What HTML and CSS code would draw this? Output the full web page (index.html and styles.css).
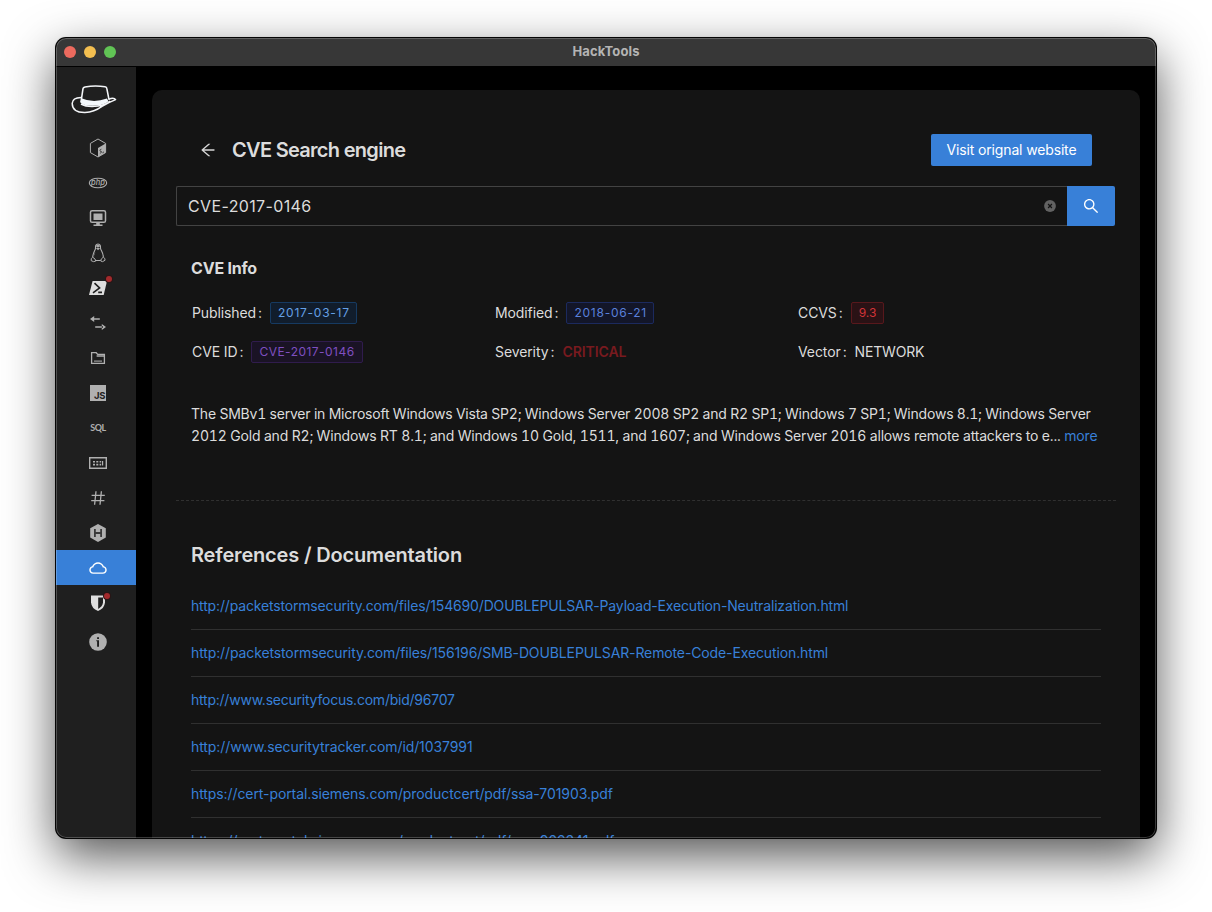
FILE: index.html
```html
<!DOCTYPE html>
<html lang="en">
<head>
<meta charset="utf-8">
<title>HackTools</title>
<link rel="stylesheet" href="styles.css">
</head>
<body>
<div class="window">
  <header class="titlebar">
    <div class="lights"><span class="light red"></span><span class="light yellow"></span><span class="light green"></span></div>
    <span class="window-title">HackTools</span>
  </header>
  <div class="body">
    <nav class="sidebar">
      <svg class="hat" width="46" height="30" viewBox="0 0 46 30">
        <path d="M10 17 L12 3.600 Q12.200 2.400 14 2 Q24 .2 34 1.800 Q35.600 2.100 35.800 3.400 L38 14.600" fill="none" stroke="#f3f5f8" stroke-width="1.600"/>
        <path d="M10.400 13.200 Q22 18.400 36 13.600 L37.400 16.200 Q34 20 24 20.600 Q13 21 9.400 17.800Z" fill="#f3f7fb"/>
        <path d="M10 12.600 Q1.600 12.800 1.200 18.400 Q1.400 27.600 14 27.400 Q23 27.200 31 21.400 Q39 16.800 44.600 14.600 Q43 12.200 37.600 14.200 M10 19 Q16 22.400 27 21 Q35 20 39 16" fill="none" stroke="#f3f5f8" stroke-width="1.500" stroke-linejoin="round"/>
      </svg>
      <ul class="menu">
        <li class="item"><svg width="18" height="20" viewBox="0 0 18 20"><path d="M9 1 L16.600 5.400 V14.600 L9 19 L1.400 14.600 V5.400Z" fill="none" stroke="#b0b0b0"/><path d="M9 10 L16.600 5.600 V14.600 L9 19Z" fill="#b0b0b0"/><path d="M12.400 11.200q-1.600.3-1.400 1.400t1.400.9q.8.8-1.500 1.900M13.400 14.800l1.600-.9" stroke="#333" stroke-width=".9" fill="none"/></svg></li>
        <li class="item"><svg width="20" height="12" viewBox="0 0 20 12"><ellipse cx="10" cy="6" rx="8.700" ry="4.800" fill="none" stroke="#adadad" stroke-width="1.100"/><text x="10" y="8.200" class="php">php</text></svg></li>
        <li class="item"><svg width="18" height="18" viewBox="0 0 18 18"><rect x="1.500" y="1.700" width="15" height="11.600" rx="1.600" fill="none" stroke="#b0b0b0" stroke-width="1.500"/><path d="M4.500 4.500h9v6.500h-9zM7.200 13.400h3.600v2H13.500V17H4.500v-1.600h2.700z" fill="#b0b0b0"/></svg></li>
        <li class="item"><svg width="18" height="20" viewBox="0 0 18 20"><path d="M9 1C6.700 1 6.400 2.800 6.500 5.200C6.500 7 3.900 9.700 3.700 14.200M9 1C11.300 1 11.600 3 11.500 5.200C11.700 7.300 14.400 9.800 14.300 14.200" fill="none" stroke="#b0b0b0" stroke-width="1.100"/><path d="M7 5.200Q9 3.800 11 5.400L9 7.200ZM6.600 8.600L5 12.600L5.600 16L4.800 11.800ZM7.300 2Q9 .8 10.700 2.200V4H7.300Z" fill="#a8a8a8"/><path d="M3.700 14.200Q1.600 15.200 2.200 17.700Q4.800 19.400 6.700 18.100Q6.900 16 3.700 14.200ZM14.300 14.200Q16.600 15.400 16 17.300Q13.200 19.600 11.700 18Q11.600 15.800 14.300 14.200ZM6.700 17.500H11.600" fill="none" stroke="#b0b0b0"/></svg></li>
        <li class="item"><svg width="18" height="16" viewBox="0 0 18 16"><path d="M3.600 1H18L14.700 15H0Z" fill="#dedede"/><path d="M5.500 3.200L10.600 8L4 12.800M9.200 12.400H13" fill="none" stroke="#1f1f1f" stroke-width="1.600"/></svg><i class="dot dot-high"></i></li>
        <li class="item"><svg width="18" height="18" viewBox="0 0 18 18"><path d="M5.200 2V8L1 5ZM4 4.200H10.800V5.800H4ZM12.800 10V16L17 13ZM6.200 12.200H14V13.800H6.200Z" fill="#b0b0b0"/></svg></li>
        <li class="item"><svg width="16" height="16" viewBox="0 0 16 16"><path d="M1.600 13.300V2.700H6.200L7.700 4.400H14.400V13.300Z M6.600 6H14" fill="none" stroke="#b0b0b0" stroke-width="1.300"/><path d="M4 10.300H12V12H4Z" fill="#777"/></svg></li>
        <li class="item"><span class="js">JS</span></li>
        <li class="item"><span class="sql">SQL</span></li>
        <li class="item"><svg width="18" height="12" viewBox="0 0 18 12"><path d="M.7.7H17.300V11.300H.7Z" fill="none" stroke="#b0b0b0" stroke-width="1.400"/><path d="M4 4h2v1.600H4zM7.300 4h2v1.600h-2zM10.600 4h1.600v1.600h-1.600zM4 6.800h2v1.600H4zM7.300 6.800h2v1.600h-2zM10.600 6.800h1.600v1.600h-1.600zM13 4h1.200v4.400H13z" fill="#b0b0b0"/></svg></li>
        <li class="item"><svg width="16" height="16" viewBox="0 0 16 16"><path d="M6 1.200L4.600 14.800M11.400 1.200L10 14.800M1.600 5.300H14.800M1.200 10.700H14.400" fill="none" stroke="#b0b0b0" stroke-width="1.300"/></svg></li>
        <li class="item"><svg width="18" height="20" viewBox="0 0 18 20"><path d="M9 1L16.800 5.200V14.600L9 19L1.200 14.600V5.200Z" fill="#b0b0b0"/><path d="M5.900 6V14M12.100 6V14M6 10H12" stroke="#3a3a3a" stroke-width="1.800"/></svg></li>
        <li class="item active"><svg width="20" height="20" viewBox="0 0 1024 1024"><path fill="#fff" d="M811.400 418.700C765.600 297.900 648.900 212 512.200 212S258.800 297.800 213 418.600C127.300 441.100 64 519.100 64 612c0 110.500 89.500 200 199.900 200h496.200C870.500 812 960 722.500 960 612c0-92.700-63.100-170.700-148.600-193.300zm36.300 281a123.070 123.070 0 01-87.600 36.300H263.900c-33.100 0-64.200-12.900-87.600-36.300A123.300 123.300 0 01140 612c0-28 9.100-54.300 26.200-76.300a125.700 125.700 0 0166.100-43.700l37.900-9.900 13.900-36.600c8.600-22.800 20.600-44.100 35.700-63.400a245.600 245.600 0 0152.400-49.900c41.100-28.900 89.500-44.200 140-44.200s98.900 15.300 140 44.200c19.900 14 37.500 30.800 52.400 49.900 15.100 19.300 27.100 40.700 35.700 63.400l13.800 36.500 37.800 10c54.300 14.500 92.100 63.800 92.100 120 0 33.100-12.900 64.300-36.300 87.700z"/></svg></li>
        <li class="item"><svg width="16" height="18" viewBox="0 0 16 18"><path d="M1 1.600H15V8.500Q14.400 14.500 8 17Q1.600 14.500 1 8.500Z" fill="#dedede"/><path d="M8.200 3.400H13V8.600Q12.400 12.800 8.200 14.900Z" fill="#1f1f1f"/></svg><i class="dot"></i></li>
        <li class="item last"><svg width="18" height="18" viewBox="0 0 18 18"><circle cx="9" cy="9" r="8.800" fill="#b0b0b0"/><path d="M7.300 7.200H10V13.800H8.100V8.300H7.300ZM8.100 4.200H10V6H8.100Z" fill="#1f1f1f"/></svg></li>
      </ul>
    </nav>
    <main class="main">
      <section class="card">
        <div class="page-header">
          <svg class="back" width="18" height="18" viewBox="0 0 1024 1024"><path d="M872 474H286.900l350.200-304c5.600-4.900 2.200-14-5.200-14h-88.500c-3.900 0-7.600 1.400-10.500 3.900L155 487.800a31.960 31.960 0 000 48.300L535.100 866c1.500 1.300 3.300 2 5.200 2h91.500c7.400 0 10.800-9.200 5.200-14L286.900 550H872c4.400 0 8-3.600 8-8v-60c0-4.400-3.600-8-8-8z"/></svg>
          <h1 class="page-title">CVE Search engine</h1>
          <button class="visit"><span>Visit orignal website</span></button>
        </div>
        <div class="search">
          <div class="input"><span class="query">CVE-2017-0146</span>
            <svg width="12" height="12" viewBox="0 0 12 12"><circle cx="6" cy="6" r="5.900" fill="#626262"/><path d="M4.100 4L7.900 8M7.900 4L4.100 8" stroke="#141414" stroke-width="1.200"/></svg>
          </div>
          <button class="search-button"><svg width="18" height="18" viewBox="0 0 1024 1024"><path fill="#fff" d="M909.600 854.500L649.900 594.800C690.200 542.700 712 479 712 412c0-80.200-31.300-155.400-87.900-212.100-56.600-56.700-132-87.900-212.100-87.900s-155.500 31.300-212.100 87.900C143.200 256.500 112 331.800 112 412c0 80.100 31.300 155.500 87.900 212.100C256.500 680.800 331.800 712 412 712c67 0 130.600-21.800 182.700-62l259.700 259.600a8.200 8.200 0 0011.600 0l43.600-43.500a8.200 8.200 0 000-11.600zM570.400 570.400C528 612.700 471.800 636 412 636s-116-23.300-158.400-65.600C211.300 528 188 471.800 188 412s23.300-116.100 65.600-158.400C296 211.300 352.200 188 412 188s116.100 23.200 158.400 65.600S636 352.200 636 412s-23.300 116.100-65.600 158.400z"/></svg></button>
        </div>
        <div class="info">
          <h2 class="info-title">CVE Info</h2>
          <dl class="facts">
            <div class="fact"><dt>Published</dt><dd class="tag blue">2017-03-17</dd></div>
            <div class="fact"><dt>Modified</dt><dd class="tag geek">2018-06-21</dd></div>
            <div class="fact"><dt>CCVS</dt><dd class="tag crimson">9.3</dd></div>
            <div class="fact"><dt>CVE ID</dt><dd class="tag purple">CVE-2017-0146</dd></div>
            <div class="fact"><dt>Severity</dt><dd class="critical">CRITICAL</dd></div>
            <div class="fact"><dt>Vector</dt><dd class="vector">NETWORK</dd></div>
          </dl>
          <p class="summary"><span class="line1">The SMBv1 server in Microsoft Windows Vista SP2; Windows Server 2008 SP2 and R2 SP1; Windows 7 SP1; Windows 8.1; Windows Server</span><br><span class="line2">2012 Gold and R2; Windows RT 8.1; and Windows 10 Gold, 1511, and 1607; and Windows Server 2016 allows remote attackers to e... <a>more</a></span></p>
        </div>
        <hr class="divider">
        <div class="refs">
          <h2 class="refs-title">References / Documentation</h2>
          <ul class="links">
            <li class="packet"><a>http://packetstormsecurity.com/files/154690/DOUBLEPULSAR-Payload-Execution-Neutralization.html</a></li>
            <li class="packet-smb"><a>http://packetstormsecurity.com/files/156196/SMB-DOUBLEPULSAR-Remote-Code-Execution.html</a></li>
            <li class="focus"><a>http://www.securityfocus.com/bid/96707</a></li>
            <li><a>http://www.securitytracker.com/id/1037991</a></li>
            <li><a>https://cert-portal.siemens.com/productcert/pdf/ssa-701903.pdf</a></li>
            <li><a>https://cert-portal.siemens.com/productcert/pdf/ssa-966341.pdf</a></li>
          </ul>
        </div>
      </section>
    </main>
  </div>
</div>
</body>
</html>
```

FILE: styles.css
```css
* { box-sizing: border-box; }
body {
  margin: 0;
  width: 1212px;
  height: 912px;
  padding: 38px 56px 0;
  background: #fff;
  overflow: hidden;
  font: 14px/22px Inter, "Liberation Sans", sans-serif;
  letter-spacing: -.18px;
  color: #dcdcdc;
}
h1, h2, p, ul, dl, dd { margin: 0; padding: 0; }
ul { list-style: none; }
button { border: 0; padding: 0; font: inherit; color: #fff; background: #3880d8; }
svg { display: block; }
a { color: #3880d8; }

.window {
  position: relative;
  width: 1100px;
  height: 800px;
  display: flex;
  flex-direction: column;
  border-radius: 10px;
  overflow: hidden;
  background: #000;
  box-shadow: 0 0 0 1px #050505, 0 18px 50px rgba(0, 0, 0, .68), 0 0 3px rgba(0, 0, 0, .2);
}
/* light rim along the window edge */
.window::after {
  content: "";
  position: absolute;
  inset: 0;
  border-radius: 10px;
  box-shadow: inset 0 0 0 1px rgba(255, 255, 255, .22);
  pointer-events: none;
}
.titlebar {
  flex: none;
  height: 29px;
  display: grid;
  grid-template-columns: 60px 1fr 60px;
  align-items: center;
  padding: 0 8px;
  background: #373737;
  border-bottom: 1px solid #000;
}
.lights { display: flex; gap: 8px; }
.light { width: 12px; height: 12px; border-radius: 50%; }
.red { background: #ec6a5e; }
.yellow { background: #f4bf50; }
.green { background: #61c455; }
.window-title {
  padding-bottom: 2px;
  text-align: center;
  color: #b4b4b4;
  font-size: 13px;
  font-weight: 700;
  letter-spacing: .1px;
}
.body { flex: 1; min-height: 0; display: flex; }

.sidebar { flex: none; width: 80px; background: #1f1f1f; }
.hat { margin: 18px 0 0 15px; }
.menu { padding-top: 15px; }
.item {
  position: relative;
  height: 35px;
  padding-left: 4px;
  display: flex;
  align-items: center;
  justify-content: center;
}
.active { background: #3880d8; }
.last { margin-top: 4px; }
.dot {
  position: absolute;
  left: 48px;
  top: 8px;
  width: 6px;
  height: 6px;
  border-radius: 50%;
  background: #a32a2c;
  box-shadow: 0 0 0 1px #2a1616;
}
.dot-high { left: 50px; top: 6px; }
.php { font: italic 500 7.5px Inter, sans-serif; text-anchor: middle; fill: #b0b0b0; letter-spacing: 0; }
.js {
  width: 16px;
  height: 16px;
  padding: 6px 1px 0 0;
  background: #b0b0b0;
  color: #222;
  font-size: 9.5px;
  line-height: 10px;
  font-weight: 700;
  text-align: right;
  letter-spacing: -.4px;
}
.sql { color: #b0b0b0; font: 700 9px/20px Lato, sans-serif; letter-spacing: -.4px; }

.main { flex: 1; min-width: 0; padding: 23px 16px 0; }
.card {
  height: 900px;
  padding: 24px;
  border-radius: 10px;
  background: #141414;
}
.page-header {
  height: 72px;
  display: flex;
  align-items: center;
  padding: 0 24px 0 23px;
}
.back { fill: #d5d5d5; }
.page-title { margin-left: 15px; font-size: 20px; line-height: 32px; font-weight: 600; letter-spacing: -.7px; }
.visit { margin-left: auto; width: 161px; height: 32px; border-radius: 2px; letter-spacing: -.15px; }
.search { display: flex; width: 939px; height: 40px; }
.input {
  flex: 1;
  display: flex;
  align-items: center;
  justify-content: space-between;
  padding: 0 11px;
  border: 1px solid #434343;
  border-right: 0;
  border-radius: 2px 0 0 2px;
}
.query { font-size: 16px; letter-spacing: .37px; }
.search-button { width: 48px; display: grid; place-items: center; border-radius: 0 2px 2px 0; }

.info { padding: 30px 15px 0; }
.info-title { font-size: 16px; line-height: 24px; font-weight: 700; letter-spacing: -.2px; }
.facts {
  display: grid;
  grid-template-columns: repeat(3, 303px);
  grid-auto-rows: 22px;
  row-gap: 17px;
  padding: 22px 0 0 1px;
}
.fact { display: flex; }
dt { letter-spacing: -.1px; }
dt::after { content: ":"; margin: 0 8px 0 2px; }
.tag {
  height: 22px;
  padding: 0 7px;
  border: 1px solid;
  border-radius: 2px;
  font-size: 12px;
  line-height: 20px;
  letter-spacing: 0;
}
.blue { color: #65a0e6; background: #111d2c; border-color: #163a61; }
.geek { color: #5a80da; background: #131629; border-color: #1c2a5e; }
.blue, .geek { padding-right: 6px; letter-spacing: .75px; }
.crimson { color: #d13438; background: #2a1215; border-color: #58181c; }
.purple { color: #7f4fc0; background: #1a1325; border-color: #301c4d; letter-spacing: .46px; }
.critical { color: #791a1f; font-weight: 600; letter-spacing: -.05px; }
.summary { margin-top: 40px; white-space: nowrap; font-variant-numeric: tabular-nums; }
.line1 { letter-spacing: -.215px; }
.line2 { letter-spacing: -.172px; }
.divider { margin: 53px 0 0; border: 0; border-top: 1px dashed #303030; }
.refs { padding: 38px 15px 0; }
.refs-title { font-size: 20px; line-height: 32px; font-weight: 600; letter-spacing: -.17px; }
.links { padding-top: 12px; letter-spacing: -.09px; }
.links li { height: 47px; padding-top: 12px; border-bottom: 1px solid #303030; white-space: nowrap; }
.packet { letter-spacing: -.165px; }
.packet-smb { letter-spacing: -.12px; }
.focus { letter-spacing: -.23px; }
```
